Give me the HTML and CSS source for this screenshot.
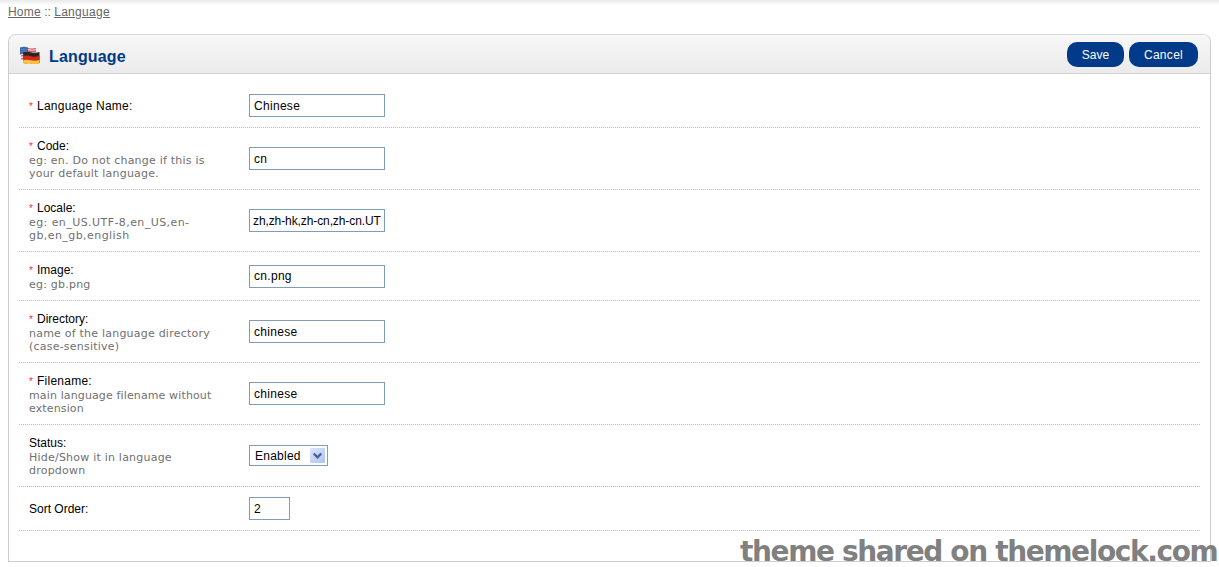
FILE: index.html
```
<!DOCTYPE html>
<html lang="en">
<head>
<meta charset="utf-8">
<title>Language</title>
<link rel="stylesheet" href="styles.css">
</head>
<body>
<nav class="breadcrumb"><a class="crumb-home">Home</a> :: <a class="crumb-lang">Language</a></nav>
<main class="box">
  <header class="heading">
    <svg class="flags" width="22" height="22" viewBox="0 0 22 22">
      <path d="M1 2.500Q5 1.200 9 2.500T17 3V14Q13 15 9 14T2 15Z" fill="#f1eaea"/>
      <path d="M9 3.500Q13 4.700 17 3.700M9 6Q13 7 17 6M2 11Q5 10 9 11M2 14Q5 13 9 14" stroke="#cf5a62" stroke-width="1.300" fill="none"/>
      <path d="M1 2.500Q5 1.200 9 2.500V9.500Q5 8 1 9.500Z" fill="#3d69ae"/>
      <path d="M3 4v4M5 3.500v4M7 4v4" stroke="#91afd9" stroke-width=".7" stroke-dasharray="1 1"/>
      <path d="M4 7.500Q8 6 12 7.200T20.500 7V18Q16 19 12 18.300T5 19Z" fill="#2c2624"/>
      <path d="M4.300 11Q8 10 12 11.200T20.500 11V18Q16 19 12 18.300T5 19Z" fill="#d42b18"/>
      <path d="M4.700 15Q8 14.200 12 15.200T20.500 15V18.500Q16 19.500 12 18.800T5 19.300Z" fill="#f5c341"/>
    </svg>
    <h1 class="title">Language</h1>
    <div class="buttons"><button class="button">Save</button><button class="button cancel">Cancel</button></div>
  </header>
  <form class="form">
    <div class="row"><div class="label"><b class="required">*</b><span class="name wide">Language Name:</span></div><input class="field" value="Chinese"></div>
    <div class="row"><div class="label"><b class="required">*</b><span class="name">Code:</span><p class="help">eg: en. Do not change if this is<br>your default language.</p></div><input class="field" value="cn"></div>
    <div class="row"><div class="label"><b class="required">*</b><span class="name">Locale:</span><p class="help loose">eg: en_US.UTF-8,en_US,en-<br>gb,en_gb,english</p></div><input class="field locale" value="zh,zh-hk,zh-cn,zh-cn.UT"></div>
    <div class="row"><div class="label"><b class="required">*</b><span class="name">Image:</span><p class="help">eg: gb.png</p></div><input class="field" value="cn.png"></div>
    <div class="row"><div class="label"><b class="required">*</b><span class="name">Directory:</span><p class="help">name of the language directory<br>(case-sensitive)</p></div><input class="field" value="chinese"></div>
    <div class="row"><div class="label"><b class="required">*</b><span class="name wide">Filename:</span><p class="help tight">main language filename without<br>extension</p></div><input class="field" value="chinese"></div>
    <div class="row"><div class="label"><span class="name">Status:</span><p class="help">Hide/Show it in language<br>dropdown</p></div>
      <div class="select"><span class="wide">Enabled</span><svg class="arrow" width="15" height="15" viewBox="0 0 15 15"><defs><linearGradient id="g" x2="1" y2="1"><stop stop-color="#dae5ff"/><stop offset="1" stop-color="#adc3f5"/></linearGradient></defs><rect width="15" height="15" rx="1" fill="url(#g)"/><path d="M3.700 5.500L7.500 9.300L11.300 5.500" fill="none" stroke="#4d6185" stroke-width="2.300"/></svg></div></div>
    <div class="row"><div class="label"><span class="name">Sort Order:</span></div><input class="field short" value="2"></div>
  </form>
</main>
<div class="watermark">theme shared on themelock.com</div>
</body>
</html>
```
FILE: styles.css
```
* { box-sizing: border-box; }
body { margin: 0; height: 567px; overflow: hidden; position: relative; padding: 5px 8px 0; background: linear-gradient(#e9e9e9, #fff 5px); font: 12px "Liberation Sans", Arial, sans-serif; color: #000; }
.breadcrumb { height: 29px; line-height: 14px; color: #666; white-space: nowrap; }
.breadcrumb a { text-decoration: underline; }
.crumb-home { letter-spacing: .2px; }
.crumb-lang { letter-spacing: .3px; }
.box { width: 1203px; height: 528px; border: 1px solid #ccc; border-top-color: #d8d8d8; border-radius: 8px 8px 0 0; }
.heading { height: 39px; border-bottom: 1px solid #d3d3d3; border-radius: 7px 7px 0 0; background: linear-gradient(#f7f7f7, #ebebeb); display: flex; align-items: center; padding: 0 12px 0 10px; }
.flags { margin-top: 3px; }
.title { margin: 6px 0 0 8px; font-size: 16px; line-height: 18px; color: #003a88; letter-spacing: .15px; }
.buttons { margin: 1px 0 0 auto; display: flex; gap: 5px; }
.button { width: 57px; height: 25px; padding: 0; border: 0; border-radius: 10px; background: #003a88; color: #fff; font: 12px "Liberation Sans", Arial, sans-serif; }
.cancel { width: 69px; letter-spacing: .3px; }
.form { padding: 10px; }
.row { display: flex; align-items: center; padding: 10px 0 10px 10px; border-bottom: 1px dotted #bbb; }
.label { width: 220px; line-height: 15px; padding-top: 1px; margin-bottom: -1px; }
.required { display: inline-block; width: 8px; font-weight: 400; color: #f02c45; font-size: 10px; line-height: 12px; }
.wide { letter-spacing: .25px; }
.help { margin: 0; font: 11px/13px "DejaVu Sans", Verdana, sans-serif; letter-spacing: .22px; color: #707070; white-space: nowrap; }
.loose { letter-spacing: .43px; }
.tight { letter-spacing: .13px; }
.field { width: 136px; height: 23px; border: 1px solid #7f9db9; padding: 0 4px; margin: 0; background: #fff; font: 12px "Liberation Sans", Arial, sans-serif; letter-spacing: .3px; color: #000; }
.locale { padding: 0 3px; letter-spacing: -.1px; }
.short { width: 41px; }
.select { width: 79px; height: 21px; border: 1px solid #7f9db9; display: flex; align-items: center; justify-content: space-between; padding: 0 2px 0 5px; }
.watermark { position: absolute; left: 740px; top: 535px; font: bold 28px/34px "DejaVu Sans", Verdana, sans-serif; letter-spacing: -1.38px; color: #808080; white-space: nowrap; }
```
